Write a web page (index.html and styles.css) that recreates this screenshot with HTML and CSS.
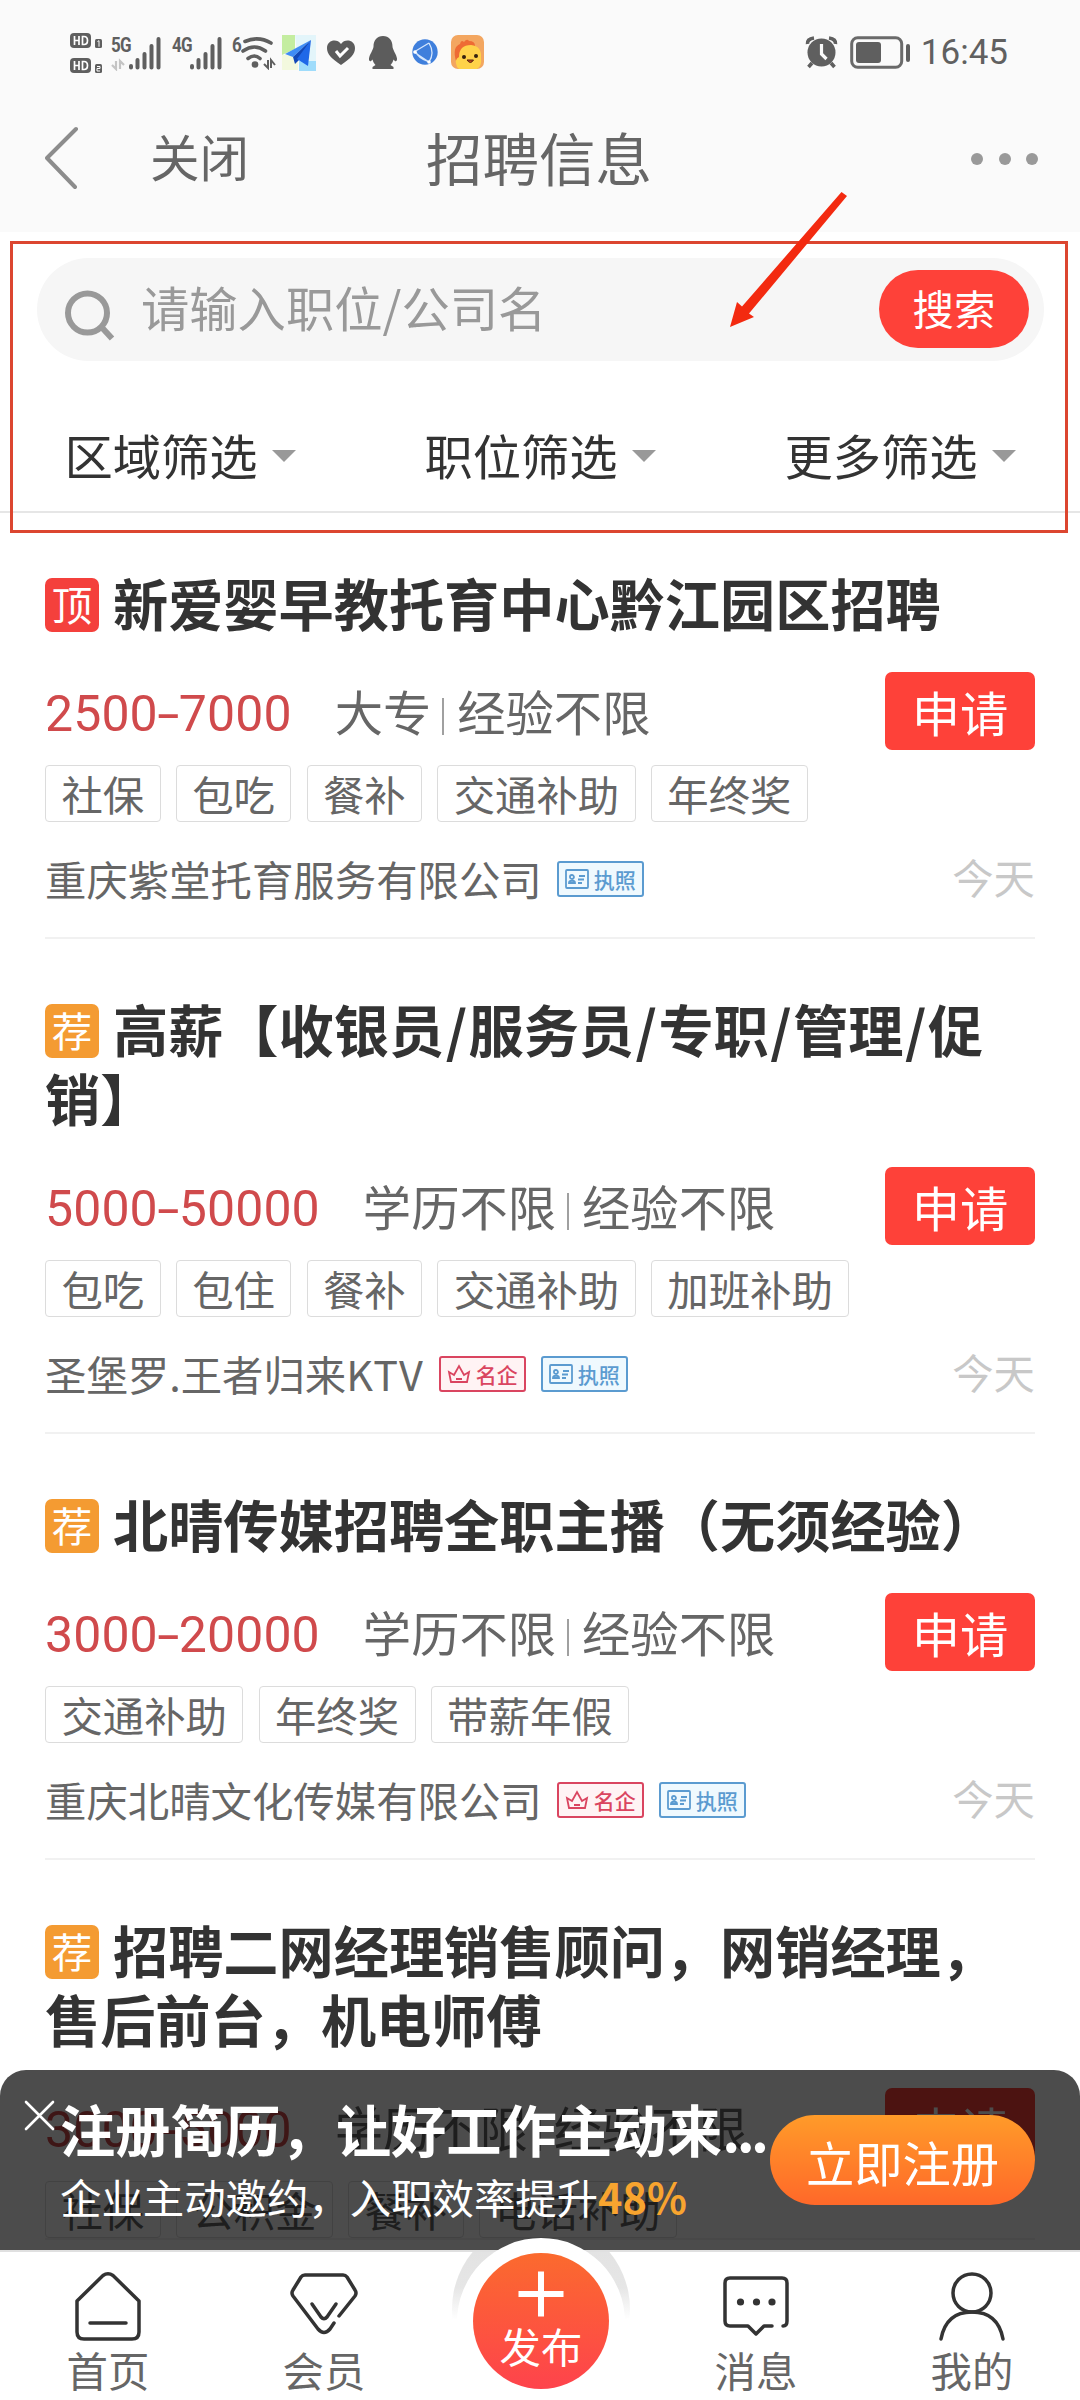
FILE: index.html
```html
<!DOCTYPE html>
<html lang="zh-CN">
<head>
<meta charset="utf-8">
<title>招聘信息</title>
<link rel="stylesheet" href="styles.css">
</head>
<body>
<header class="top">
  <div class="status">
    <div class="status-left">
      <svg class="ic-hd" width="34" height="44" viewBox="0 0 34 44">
        <rect x="0" y="3" width="21" height="15" rx="4" fill="#5f5f5f"/><rect x="0" y="28" width="21" height="15" rx="4" fill="#5f5f5f"/>
        <rect x="25" y="9" width="7" height="9" rx="1.5" fill="#5f5f5f"/><rect x="25" y="34" width="7" height="9" rx="1.5" fill="#5f5f5f"/>
        <path d="M4.500 6v9M4.500 10.500h4.500M9 6v9M12.500 6.500v8h1.500q3.500 0 3.500-4t-3.500-4zM4.500 31v9M4.500 35.500h4.500M9 31v9M12.500 31.500v8h1.500q3.500 0 3.500-4t-3.500-4z" fill="none" stroke="#fff" stroke-width="1.700"/>
        <path d="M27.500 11.500l1.500-.8v6M27 36.500h3v2h-3v2.500h3" fill="none" stroke="#fff" stroke-width="1"/>
      </svg>
      <div class="signal signal-5g">
        <span class="net">5G</span>
        <svg width="50" height="34" viewBox="0 0 50 34"><path d="M5 24v8l-4-4M9 32v-8l4 4" stroke="#c4c4c4" stroke-width="2.200" fill="none"/><path d="M20 29v1.500M26.500 23v7.500M33.500 17v13.500M40.500 9v21.500M47.500 2v28.500" stroke="#5f5f5f" stroke-width="4" stroke-linecap="round"/></svg>
      </div>
      <div class="signal signal-4g">
        <span class="net">4G</span>
        <svg width="50" height="34" viewBox="0 0 50 34"><path d="M20 29v1.500M26.500 23v7.500M33.500 17v13.500M40.500 9v21.500M47.500 2v28.500" stroke="#5f5f5f" stroke-width="4" stroke-linecap="round"/></svg>
      </div>
      <div class="wifi">
        <span class="net">6</span>
        <svg width="36" height="34" viewBox="0 0 36 34"><g fill="none" stroke="#5f5f5f" stroke-width="3.600" stroke-linecap="round"><path d="M5 5.500q13.500-6 26 1.500M3 15q11.500-8 22.500 0M8 22.500q6.500-5 12 0"/></g><circle cx="15" cy="28.500" r="3.300" fill="#5f5f5f"/><path d="M28 24v8l-4-4M31 32v-8l4 5" stroke="#5f5f5f" stroke-width="2" fill="none"/></svg>
      </div>
      <svg class="ic-plane" width="34" height="36" viewBox="0 0 34 36"><path d="M0 0h13v14l-13 6z" fill="#c4eda0"/><path d="M13 0h21v26H16z" fill="#e3f5fa"/><path d="M0 20h16v15H0z" fill="#f3f9de"/><path d="M17 26h17v10H17z" fill="#9fdcfb"/><path d="M29 5L3 19l8 3z" fill="#3f8cf5"/><path d="M29 5L11 22l2 7 4-4z" fill="#1248b8"/><path d="M29 5L15 24l11 7z" fill="#2068e8"/></svg>
      <svg class="ic-heart" width="30" height="28" viewBox="0 0 30 28"><path d="M15 26C5 19 1 15 1 9 1 1 11-1 15 5c4-6 14-4 14 4 0 6-4 10-14 17z" fill="#5c5c5c"/><path d="M10 12l4 5 8-8" fill="none" stroke="#fff" stroke-width="3"/></svg>
      <svg class="ic-qq" width="30" height="34" viewBox="0 0 30 34"><path d="M15 1c6 0 9.500 4.500 9.500 10.500 0 3 4 8 4.500 12 .2 3-1.500 4-3.500 1-.5 2-1.500 4-3 5.500l3 2v2h-21v-2l3-2c-1.500-1.500-2.500-3.500-3-5.500-2 3-3.700 2-3.500-1 .5-4 4.500-9 4.500-12C5.500 5.500 9 1 15 1z" fill="#5c5c5c"/></svg>
      <svg class="ic-globe" width="28" height="28" viewBox="0 0 28 28"><circle cx="14" cy="14" r="12.700" fill="#3f7fdc"/><path d="M3 14L18 5M3 14l15 10M18 5q6 10 0 19M5 14q2 6 13 10" fill="none" stroke="#d5e6fc" stroke-width="1.300"/><circle cx="4" cy="14" r="1.800" fill="#fff"/><circle cx="18" cy="24" r="1.800" fill="#fff"/></svg>
      <svg class="ic-chick" width="33" height="34" viewBox="0 0 33 34"><rect width="33" height="34" rx="7" fill="#f3a660"/><path d="M5 26Q1 12 9 9q1-5 4-2 3-4 5-1 6 0 6 5L14 27z" fill="#ee6b34"/><path d="M6 32q-3-8 2-10 0-12 12-12 11 1 10 13 1 8-4 11H8z" fill="#ffd24a"/><circle cx="13" cy="22" r="2" fill="#35220f"/><circle cx="25" cy="21" r="2" fill="#35220f"/><path d="M16 25q3.500 5 6.500 0z" fill="#c4431d" stroke="#552410" stroke-width="1"/></svg>
    </div>
    <div class="status-right">
      <svg width="33" height="33" viewBox="0 0 33 33"><circle cx="16.500" cy="16.500" r="14" fill="#5f5f5f"/><path d="M2.500 8Q2 3 9 2M30.500 8Q31 3 24 2M7 27l-3.500 4M26 27l3.500 4" stroke="#5f5f5f" stroke-width="3.600" fill="none"/><path d="M16.500 8v10l5 5" stroke="#fafafa" stroke-width="3.200" fill="none"/></svg>
      <svg width="61" height="33" viewBox="0 0 61 33"><rect x="1.700" y="1.700" width="50" height="29.600" rx="6" fill="none" stroke="#6a6a6a" stroke-width="3"/><rect x="6" y="6" width="25" height="21" rx="3" fill="#5f5f5f"/><rect x="56" y="8" width="4" height="18" rx="2" fill="#5f5f5f"/></svg>
      <span class="clock">16:45</span>
    </div>
  </div>
  <nav class="titlebar">
    <svg class="back" width="34" height="64" viewBox="0 0 34 64"><path d="M31 3L2 32l28 29" fill="none" stroke="#8c8c8c" stroke-width="4" stroke-linecap="round" stroke-linejoin="round"/></svg>
    <span class="close">关闭</span>
    <h1 class="page-title">招聘信息</h1>
    <div class="more"><i></i><i></i><i></i></div>
  </nav>
</header>

<section class="filters">
  <div class="search">
    <svg width="52" height="54" viewBox="0 0 52 54"><circle cx="23.500" cy="24" r="19.500" fill="none" stroke="#999" stroke-width="6"/><path d="M37 37.500l11 12" stroke="#999" stroke-width="6"/></svg>
    <span class="placeholder">请输入职位/公司名</span>
    <span class="search-btn">搜索</span>
  </div>
  <div class="filter-row">
    <div class="filter"><span>区域筛选</span><i class="caret"></i></div>
    <div class="filter"><span>职位筛选</span><i class="caret"></i></div>
    <div class="filter"><span>更多筛选</span><i class="caret"></i></div>
  </div>
</section>

<main class="jobs">
  <article class="job">
    <h2><b class="mark top-mark"><span>顶</span></b>新爱婴早教托育中心黔江园区招聘</h2>
    <div class="info"><span class="pay">2500<i>-</i>7000</span><span class="req">大专</span><i class="bar"></i><span class="req">经验不限</span><span class="apply">申请</span></div>
    <div class="tags"><span>社保</span><span>包吃</span><span>餐补</span><span>交通补助</span><span>年终奖</span></div>
    <div class="company"><span class="name">重庆紫堂托育服务有限公司</span>
      <span class="cert lic"><svg width="24" height="20" viewBox="0 0 24 20"><rect x="1" y="1" width="22" height="18" rx="1"/><path d="M4 14c0-3 6-3 6 0zM7 10a2 2 0 1 0-.1-4 2 2 0 0 0 .1 4M14 7h6M13 10.500h6M13 14h4"/></svg>执照</span>
      <time>今天</time></div>
  </article>
  <article class="job">
    <h2><b class="mark"><span>荐</span></b>高薪【收银员<i>/</i>服务员<i>/</i>专职<i>/</i>管理<i>/</i>促<br>销】</h2>
    <div class="info"><span class="pay">5000<i>-</i>50000</span><span class="req">学历不限</span><i class="bar"></i><span class="req">经验不限</span><span class="apply">申请</span></div>
    <div class="tags"><span>包吃</span><span>包住</span><span>餐补</span><span>交通补助</span><span>加班补助</span></div>
    <div class="company"><span class="name">圣堡罗.王者归来<i>KTV</i></span>
      <span class="cert fam"><svg width="24" height="22" viewBox="0 0 24 22"><path d="M4 19L2 9l5 3 5-9 5 9 5-3-2 10zM9 16h6"/></svg>名企</span>
      <span class="cert lic"><svg width="24" height="20" viewBox="0 0 24 20"><rect x="1" y="1" width="22" height="18" rx="1"/><path d="M4 14c0-3 6-3 6 0zM7 10a2 2 0 1 0-.1-4 2 2 0 0 0 .1 4M14 7h6M13 10.500h6M13 14h4"/></svg>执照</span>
      <time>今天</time></div>
  </article>
  <article class="job">
    <h2><b class="mark"><span>荐</span></b>北晴传媒招聘全职主播（无须经验）</h2>
    <div class="info"><span class="pay">3000<i>-</i>20000</span><span class="req">学历不限</span><i class="bar"></i><span class="req">经验不限</span><span class="apply">申请</span></div>
    <div class="tags"><span>交通补助</span><span>年终奖</span><span>带薪年假</span></div>
    <div class="company"><span class="name">重庆北晴文化传媒有限公司</span>
      <span class="cert fam"><svg width="24" height="22" viewBox="0 0 24 22"><path d="M4 19L2 9l5 3 5-9 5 9 5-3-2 10zM9 16h6"/></svg>名企</span>
      <span class="cert lic"><svg width="24" height="20" viewBox="0 0 24 20"><rect x="1" y="1" width="22" height="18" rx="1"/><path d="M4 14c0-3 6-3 6 0zM7 10a2 2 0 1 0-.1-4 2 2 0 0 0 .1 4M14 7h6M13 10.500h6M13 14h4"/></svg>执照</span>
      <time>今天</time></div>
  </article>
  <article class="job">
    <h2><b class="mark"><span>荐</span></b>招聘二网经理销售顾问，网销经理，<br>售后前台，机电师傅</h2>
    <div class="info"><span class="pay">3000<i>-</i>5000</span><span class="req">学历不限</span><i class="bar"></i><span class="req">经验不限</span><span class="apply">申请</span></div>
    <div class="tags"><span>社保</span><span>公积金</span><span>餐补</span><span>电话补助</span></div>
  </article>
</main>

<footer class="bottom">
  <div class="promo">
    <svg class="dismiss" width="32" height="32" viewBox="0 0 32 32"><path d="M2 2l27 27M29 2L2 29" stroke="#fff" stroke-width="2.600" stroke-linecap="round"/></svg>
    <div class="promo-text">
      <strong>注册简历，让好工作主动来<i>...</i></strong>
      <p>企业主动邀约，入职效率提升<em>48%</em></p>
    </div>
    <span class="join">立即注册</span>
  </div>
  <nav class="tabs">
    <div class="tab"><svg width="72" height="72" viewBox="0 0 72 72"><g fill="none" stroke="#333" stroke-width="3.500" stroke-linecap="round" stroke-linejoin="round"><path d="M5 30v31q0 7 7 7h48q7 0 7-7V30L41 4.500q-5-3.500-10 0z"/><path d="M18 52h36"/></g></svg><span>首页</span></div>
    <div class="tab"><svg width="72" height="72" viewBox="0 0 72 72"><g fill="none" stroke="#333" stroke-width="3.500" stroke-linecap="round" stroke-linejoin="round"><path d="M51 45L67 25q2-3 0-6L59 6q-1.500-2-4-2H17q-2.500 0-4 2L5 19q-2 3 0 6l25 33q6 7 12 0l4-6"/><path d="M24 33l9 13q3 3.500 6 0l9-13"/></g></svg><span>会员</span></div>
    <div class="tab publish"><div class="halo"></div><div class="ring"></div><div class="disc"><svg width="46" height="46" viewBox="0 0 46 46"><path d="M23 .500v45M.500 23h45" stroke="#fff" stroke-width="6"/></svg><span>发布</span></div></div>
    <div class="tab"><svg width="72" height="72" viewBox="0 0 72 72"><g fill="none" stroke="#333" stroke-width="3.500" stroke-linecap="round" stroke-linejoin="round"><path d="M52 55h-8l-8 8-8-8H10q-5 0-5-5V12q0-5 5-5h52q5 0 5 5v38q0 5-4 5"/></g><g fill="#333"><circle cx="20.500" cy="31" r="3.600"/><circle cx="36.500" cy="31" r="3.600"/><circle cx="52" cy="31" r="3.600"/></g></svg><span>消息</span></div>
    <div class="tab"><svg width="72" height="72" viewBox="0 0 72 72"><g fill="none" stroke="#333" stroke-width="3.500" stroke-linecap="round"><circle cx="36" cy="22" r="19"/><path d="M5 68Q10 41 36 41t31 27"/></g></svg><span>我的</span></div>
  </nav>
</footer>

<div class="callout"></div>
<svg class="arrow" width="124" height="140" viewBox="0 0 124 140"><path d="M4 137l7-25 5 4.500L115.500 2l5.500 4-98 117.500 5 3.500z" fill="#f32a10"/></svg>
</body>
</html>
```
FILE: styles.css
```css
* { box-sizing: border-box; }
body {
  margin: 0;
  width: 1080px;
  height: 2400px;
  overflow: hidden;
  position: relative;
  background: #fff;
  color: #333;
  font-family: "Noto Sans CJK SC", sans-serif;
  text-spacing-trim: space-all;
}
i, em { font-style: normal; }
svg { display: block; flex: none; }

/* header */
.top { height: 232px; background: #fafafa; }
.status { display: flex; justify-content: space-between; padding: 30px 72px 0 70px; height: 96px; }
.status-left { display: flex; }
.status-right { display: flex; align-items: center; height: 45px; gap: 11px; }
.status-right svg:first-child { margin-right: 1px; }
.clock { font: 35px/40px Roboto, sans-serif; color: #606060; margin-left: -1px; }
.net { font: bold 20px/20px "Roboto", sans-serif; letter-spacing: -1px; color: #5f5f5f; display: inline-block; transform: scaleX(.85); transform-origin: 0 0; }
.signal, .wifi { display: grid; height: 40px; }
.signal > *, .wifi > * { grid-area: 1 / 1; }
.signal .net, .wifi .net { margin-top: 5px; }
.signal svg { margin-top: 7px; }
.signal-5g { margin-left: 7px; width: 50px; }
.signal-4g { margin-left: 11px; width: 50px; }
.wifi { margin-left: 10px; width: 43px; }
.wifi svg { margin: 6px 0 0 8px; }
.ic-plane { margin: 5px 0 0 7px; }
.ic-heart { margin: 9px 0 0 10px; }
.ic-qq { margin: 5px 0 0 12px; }
.ic-globe { margin: 8px 0 0 13px; }
.ic-chick { margin: 5px 0 0 12px; }

.titlebar { display: grid; grid-template-columns: 105px 276px 320px 1fr; align-items: center; height: 124px; padding: 0 42px 0 45px; color: #666; }
.close { font-size: 49.500px; line-height: 64px; margin-top: -4px; }
.page-title { margin: -5px 0 0; font-size: 56.500px; line-height: 70px; font-weight: 400; }
.more { display: flex; gap: 15.300px; justify-self: end; margin-top: 2px; }
.more i { width: 12px; height: 12px; border-radius: 50%; background: #999; }

/* search and filters */
.filters { height: 281px; padding-top: 26px; border-bottom: 2px solid #e6e6e6; }
.search { margin: 0 36px 0 37px; height: 103px; border-radius: 52px; background: #f6f6f6; display: flex; align-items: center; padding: 0 15px 0 27px; }
.search svg { margin-top: 13px; }
.placeholder { flex: 1; padding-left: 25px; font-size: 48.300px; line-height: 60px; color: #999; margin-top: -7px; }
.search-btn { width: 150px; height: 78px; margin-top: -2px; border-radius: 39px; background: #fe4139; color: #fff; font-size: 41.400px; line-height: 75px; text-align: center; }
.filter-row { display: grid; grid-template-columns: repeat(3, 1fr); height: 151px; padding-top: 39px; }
.filter { display: flex; justify-content: center; align-items: center; height: 112px; font-size: 48.300px; line-height: 60px; }
.filter span { margin-top: -5px; }
.caret { border: 12px solid transparent; border-top-color: #999; border-bottom: 0; margin-left: 14px; }

/* job list */
.job { margin: 0 45px; padding-top: 58px; border-bottom: 2px solid #f1f1f1; }
.job h2 { margin: 0; font-size: 55.200px; line-height: 69px; font-weight: 700; white-space: nowrap; position: relative; top: -3px; }
.job h2 i { padding: 0 1.500px; }
.mark { display: inline-block; width: 54px; height: 54px; margin: 10px 14px 0 0; border-radius: 7px; background: #f49b32; color: #fff; font-size: 40.500px; line-height: 52px; font-weight: 400; text-align: center; vertical-align: top; }
.top-mark { background: #f4403c; }
.info { margin-top: 32px; height: 78px; display: flex; align-items: center; color: #666; font-size: 48.300px; line-height: 60px; }
.info .req { margin-top: -2px; }
.pay { color: #d04a4c; font-family: Roboto, sans-serif; font-size: 50px; margin-right: 43px; letter-spacing: .1px; margin-top: 6px; }
.pay i { display: inline-block; width: 21px; text-align: center; transform: scaleX(1.600); }
.bar { width: 2px; height: 37px; background: #a0a0a0; margin: 10px 13px 0 11px; }
.apply { margin-left: auto; width: 150px; height: 78px; border-radius: 7px; background: #fe4139; color: #fff; text-align: center; line-height: 78px; }
.tags { display: flex; gap: 15.200px; margin-top: 15px; }
.tags span { height: 57px; border: 1.500px solid #dcdcdc; border-radius: 4px; padding: 0 15.400px; font-size: 41.400px; line-height: 54px; color: #666; white-space: nowrap; }
.company { display: flex; align-items: center; height: 60px; margin: 27px 0 28px; font-size: 41.400px; line-height: 56px; color: #666; }
.company .name { margin: -2px 0 0; }
.company .name i { letter-spacing: 1px; }
.company time { margin: -6px 0 0 auto; color: #c8c8c8; }
.cert { display: flex; align-items: center; justify-content: space-between; width: 87px; height: 36px; margin-left: 15px; padding: 0 6px; border: 2px solid; border-radius: 3px; font-size: 21px; font-weight: 500; line-height: 28px; }
.cert svg { fill: none; stroke: currentColor; stroke-width: 1.800; }
.lic { color: #5b9bd0; background: #eff9fe; }
.fam { color: #da4560; background: #fff3f4; }

/* bottom overlay */
.bottom { position: absolute; left: 0; right: 0; top: 2070px; }
.promo { height: 180px; border-radius: 26px 26px 0 0; background: rgba(0, 0, 0, .7); color: #fff; display: flex; padding: 0 45px 0 24px; }
.dismiss { margin-top: 30px; }
.promo-text { flex: 1; min-width: 0; margin-left: 4px; white-space: nowrap; padding-top: 22px; }
.promo strong { display: block; font-size: 55.200px; line-height: 72px; }
.promo strong i { letter-spacing: -3.500px; }
.promo p { margin: 4px 0 0; font-size: 41.400px; line-height: 56px; }
.promo em { color: #f8a42f; font-weight: 700; }
.join { flex: none; width: 265px; height: 90px; margin-top: 45px; border-radius: 45px; background: linear-gradient(#ff9b29, #ff6829); font-size: 48.300px; line-height: 92px; text-align: center; }
.tabs { height: 150px; display: grid; grid-template-columns: repeat(5, 1fr); background: #fff; border-top: 2px solid #e0e0e0; }
.tab { display: flex; flex-direction: column; align-items: center; padding-top: 19px; position: relative; }
.tab > span { font-size: 41.400px; line-height: 50px; color: #666; margin-top: 1px; }
.halo, .ring, .disc { position: absolute; border-radius: 50%; }
.halo { left: 20px; top: -32px; width: 178px; height: 178px; background: linear-gradient(#e3e3e3 18%, #e6e6e6 38%, #fff 56%); clip-path: inset(32px 0 0 0); }
.ring { left: 25px; top: -14px; width: 168px; height: 168px; background: #fff; }
.disc { left: 41px; top: 1px; width: 136px; height: 136px; background: linear-gradient(#fb6a2e, #fe434c); color: #fff; display: flex; flex-direction: column; align-items: center; padding-top: 18px; }
.disc span { font-size: 41.400px; line-height: 50px; margin-top: 3px; }

/* guide marks above the page */
.callout { position: absolute; left: 10px; top: 241px; width: 1058px; height: 292px; border: 3px solid #dc4630; }
.arrow { position: absolute; left: 726px; top: 190px; }
```
